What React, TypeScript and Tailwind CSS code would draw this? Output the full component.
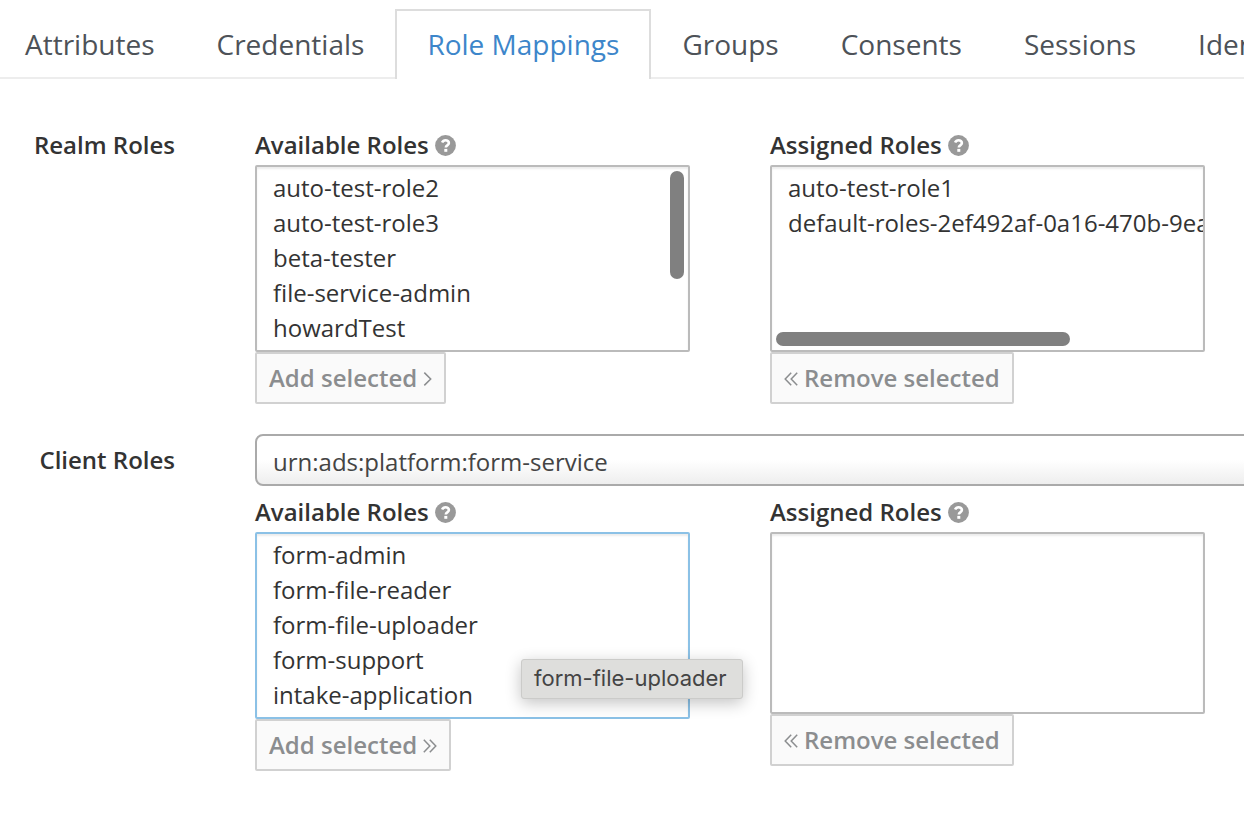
import { useId } from "react";
import clsx from "clsx";

const tabs = ["Attributes", "Credentials", "Role Mappings", "Groups", "Consents", "Sessions", "Identity Provider Links"];

function HelpIcon() {
  return (
    <svg viewBox="0 0 21 21" className="size-[21px]" aria-hidden="true">
      <circle cx="10.5" cy="10.5" r="10.4" fill="#999999" />
      <path
        d="M7.1 7.6C7.8 6 9 5.2 10.5 5.2c1.9 0 3.4 1.1 3.4 2.8 0 2.4-3.1 2.3-3.1 4.4"
        fill="none"
        stroke="#ffffff"
        strokeWidth="2.6"
      />
      <rect x="9.3" y="13.9" width="3" height="2.9" fill="#ffffff" />
    </svg>
  );
}

function Chevrons({ count, left = false }: { count: 1 | 2; left?: boolean }) {
  return (
    <svg
      viewBox={count === 2 ? "0 -2 14 16" : "0 -2 9 16"}
      className={clsx("h-4", count === 2 ? "w-3.5" : "w-[9px]")}
      fill="none"
      stroke="currentColor"
      strokeWidth="1.5"
      aria-hidden="true"
    >
      {left ? (
        <path d="M7.2 .8 1.2 7l6 6.2M13.2 .8 7.2 7l6 6.2" />
      ) : count === 2 ? (
        <path d="M.8 .8 6.8 7l-6 6.2M6.8 .8l6 6.2-6 6.2" />
      ) : (
        <path d="M1.3 .6 7.7 7l-6.4 6.4" />
      )}
    </svg>
  );
}

type RoleListProps = {
  title: string;
  roles: string[];
  action: "add" | "addAll" | "remove";
  focused?: boolean;
  short?: boolean;
  scroll?: "x" | "y";
  tooltip?: string;
};

function RoleList({ title, roles, action, focused, short, scroll, tooltip }: RoleListProps) {
  const id = useId();
  return (
    <div className="flex min-w-0 flex-col items-start">
      <div className="mb-0.5 flex items-center gap-1.5">
        <label htmlFor={id} className="font-semibold leading-9">{title}</label>
        <HelpIcon />
      </div>
      <div className="relative w-full">
        <select
          id={id}
          multiple
          size={5}
          className={clsx(
            "block w-full overflow-hidden rounded-[2px] border-2 bg-white px-3 py-1 shadow-[inset_0_2px_2px_rgba(0,0,0,0.08)] outline-none [scrollbar-width:none]",
            focused ? "border-[#8bc1e6]" : "border-[#bbbbbb]",
            short ? "h-[182px]" : "h-[187px]",
          )}
        >
          {roles.map((role) => (
            <option key={role} className="h-[35px] px-1 py-0 leading-[35px]">{role}</option>
          ))}
        </select>
        {scroll === "y" && <div className="absolute top-1.5 right-1.5 h-[108px] w-3.5 rounded-full bg-[#808080]" />}
        {scroll === "x" && <div className="absolute bottom-1.5 left-1.5 h-3.5 w-[294px] rounded-full bg-[#808080]" />}
        {tooltip && (
          <div
            role="tooltip"
            className="absolute top-[127px] left-[266px] h-10 rounded-[3px] border border-[#cbcbc9] bg-[#dededc] pr-[15px] pl-3 font-['Inter',sans-serif] text-[22px] leading-9 whitespace-nowrap text-[#444444] shadow-[0_4px_16px_rgba(0,0,0,0.24)]"
          >
            {tooltip}
          </div>
        )}
      </div>
      <button
        type="button"
        disabled
        className="flex h-[52px] items-center gap-1.5 rounded-[2px] border-2 border-[#d1d1d1] bg-[#fafafa] px-3 font-semibold whitespace-nowrap text-[#8b8d8f]"
      >
        {action === "remove" && <Chevrons count={2} left />}
        {action === "remove" ? "Remove selected" : "Add selected"}
        {action === "add" && <Chevrons count={1} />}
        {action === "addAll" && <Chevrons count={2} />}
      </button>
    </div>
  );
}

export default function App() {
  return (
    <div className="min-h-screen overflow-hidden bg-white font-['Open_Sans',sans-serif] text-2xl text-[#333333]">
      <nav className="border-b-2 border-[#ededed] pt-[9px]">
        <ul className="-mb-0.5 -ml-1.5 flex">
          {tabs.map((tab) => {
            const active = tab === "Role Mappings";
            return (
              <li key={tab} className="shrink-0">
                <a
                  href="#"
                  aria-current={active ? "page" : undefined}
                  className={clsx(
                    "block h-[70px] text-[28px] leading-[66px] whitespace-nowrap",
                    active
                      ? "border-2 border-b-0 border-[#dddddd] bg-white px-[30px] text-[#3d86ca]"
                      : "border-t-2 border-transparent px-[31px] text-[#4d5258]",
                  )}
                >
                  {tab}
                </a>
              </li>
            );
          })}
        </ul>
      </nav>

      <form className="flex flex-col gap-[30px] pt-12">
        <div className="flex gap-20">
          <div className="w-[175px] shrink-0 text-right font-semibold leading-9">Realm Roles</div>
          <div className="grid flex-1 grid-cols-[minmax(0,435px)_minmax(0,435px)] gap-20 pr-9">
            <RoleList
              title="Available Roles"
              roles={["auto-test-role2", "auto-test-role3", "beta-tester", "file-service-admin", "howardTest"]}
              action="add"
              scroll="y"
            />
            <RoleList
              title="Assigned Roles"
              roles={["auto-test-role1", "default-roles-2ef492af-0a16-470b-9ea7"]}
              action="remove"
              scroll="x"
            />
          </div>
        </div>

        <div className="flex gap-20">
          <label htmlFor="client" className="w-[175px] shrink-0 pt-2 text-right font-semibold leading-9">
            Client Roles
          </label>
          <div className="flex min-w-0 flex-1 flex-col gap-2">
            <div className="-mr-3 flex">
              <select
                id="client"
                className="h-[52px] flex-1 appearance-none rounded-lg border-2 border-[#aaaaaa] bg-linear-to-t from-[#eeeeee] to-white to-50% px-4 pt-1 text-[#444444] outline-none"
              >
                <option>urn:ads:platform:form-service</option>
              </select>
            </div>
            <div className="grid grid-cols-[minmax(0,435px)_minmax(0,435px)] gap-20 pr-9">
              <RoleList
                title="Available Roles"
                roles={["form-admin", "form-file-reader", "form-file-uploader", "form-support", "intake-application"]}
                action="addAll"
                focused
                tooltip="form-file-uploader"
              />
              <RoleList title="Assigned Roles" roles={[]} action="remove" short />
            </div>
          </div>
        </div>
      </form>
    </div>
  );
}
